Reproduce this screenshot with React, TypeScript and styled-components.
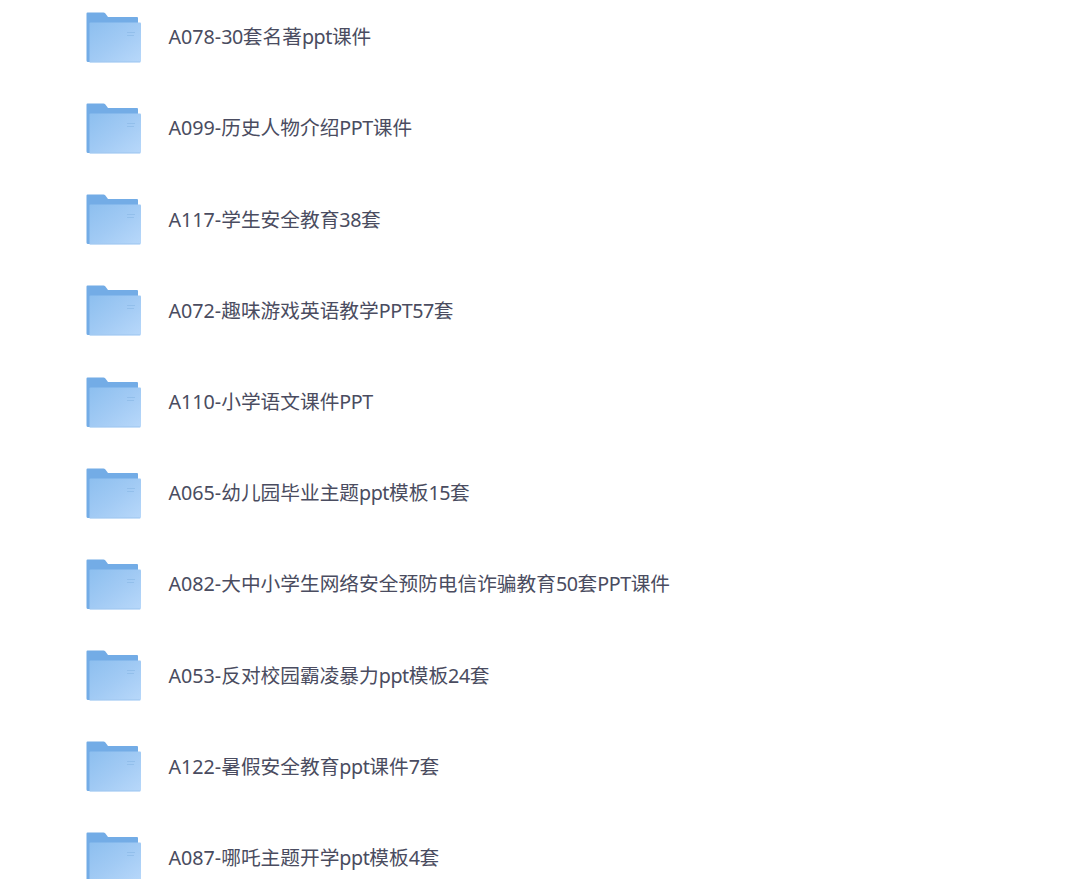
import React from "react";
import styled, { createGlobalStyle } from "styled-components";

const GlobalStyle = createGlobalStyle`
  body {
    margin: 0;
    background: #fff;
  }
`;

const List = styled.ul`
  box-sizing: border-box;
  width: 1080px;
  height: 878.5px;
  margin: 0;
  padding: 0 0 0 86px;
  overflow: hidden;
  list-style: none;
`;

const Row = styled.li`
  display: flex;
  align-items: center;
  gap: 27.5px;
  height: 74.6px;
  padding-bottom: 16.6px;

  &:last-child {
    padding-bottom: 0;
  }
`;

const Icon = styled.svg`
  flex: none;
  width: 55px;
  height: 51px;
`;

const Name = styled.span`
  color: #4a4c60;
  font-family: "Noto Sans", "Noto Sans CJK SC", sans-serif;
  font-size: 19.7px;
  line-height: 28px;
  white-space: nowrap;
`;

const Latin = styled.span`
  letter-spacing: -0.45px;
`;

const folders = [
  { code: "A078-", title: "30套名著ppt课件" },
  { code: "A099-", title: "历史人物介绍PPT课件" },
  { code: "A117-", title: "学生安全教育38套" },
  { code: "A072-", title: "趣味游戏英语教学PPT57套" },
  { code: "A110-", title: "小学语文课件PPT" },
  { code: "A065-", title: "幼儿园毕业主题ppt模板15套" },
  { code: "A082-", title: "大中小学生网络安全预防电信诈骗教育50套PPT课件" },
  { code: "A053-", title: "反对校园霸凌暴力ppt模板24套" },
  { code: "A122-", title: "暑假安全教育ppt课件7套" },
  { code: "A087-", title: "哪吒主题开学ppt模板4套" }
];

// Latin words and digits inside a Chinese title are set a bit tighter
function renderTitle(title: string) {
  return title
    .split(/([A-Za-z0-9]+)/)
    .map((part, i) => (i % 2 ? <Latin key={i}>{part}</Latin> : part));
}

const FolderIcon = () => (
  <Icon viewBox="0 0 55 51" aria-hidden="true">
    <defs>
      <linearGradient id="front" x1="0" y1="0" x2="1" y2="1">
        <stop offset="0" stopColor="#8dbfef" />
        <stop offset="0.5" stopColor="#a1caf4" />
        <stop offset="1" stopColor="#b8d8fa" />
      </linearGradient>
    </defs>
    <path
      d="M1.5 0.5H17.5Q18.5 0.5 19.2 1.3L22 5H51Q52 5 52 6V50H2Q0.5 50 0.5 48.5V1.5Q0.5 0.5 1.5 0.5Z"
      fill="#73ace6"
    />
    <path
      d="M4.5 10.5H54Q55 10.5 55 11.5V49Q55 50.5 53.5 50.5H3.5V11.5Q3.5 10.5 4.5 10.5Z"
      fill="url(#front)"
    />
    <path d="M4 49.8H54" stroke="#a3c9f1" />
    <path d="M41 20.5H49M41 23.5H48" stroke="#8ebbe9" strokeWidth="0.8" />
  </Icon>
);

const App = () => (
  <>
    <GlobalStyle />
    <List>
      {folders.map(({ code, title }) => (
        <Row key={code}>
          <FolderIcon />
          <Name>
            {code}
            {renderTitle(title)}
          </Name>
        </Row>
      ))}
    </List>
  </>
);

export default App;
